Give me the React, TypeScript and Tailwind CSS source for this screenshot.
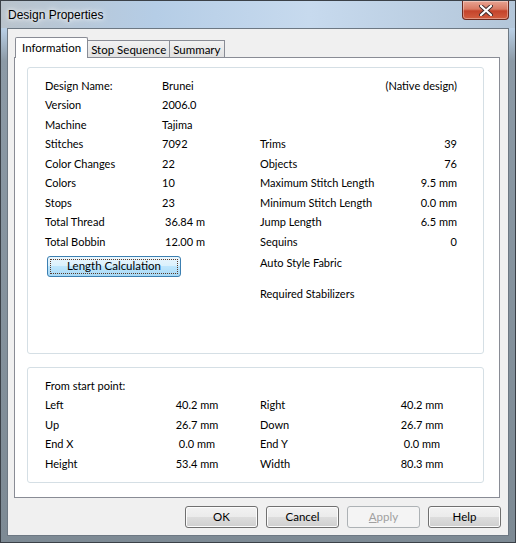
import React from 'react';

const titleFont = { fontFamily: '"Liberation Sans", Arial, sans-serif' };
const bodyFont = { fontFamily: 'Lato, "Liberation Sans", Arial, sans-serif' };

interface Pair {
  label: string;
  value: string;
  pad?: boolean;
}

const leftRows: Pair[] = [
  { label: 'Design Name:', value: 'Brunei' },
  { label: 'Version', value: '2006.0' },
  { label: 'Machine', value: 'Tajima' },
  { label: 'Stitches', value: '7092' },
  { label: 'Color Changes', value: '22' },
  { label: 'Colors', value: '10' },
  { label: 'Stops', value: '23' },
  { label: 'Total Thread', value: '36.84 m', pad: true },
  { label: 'Total Bobbin', value: '12.00 m', pad: true },
];

const rightRows: Pair[] = [
  { label: 'Trims', value: '39' },
  { label: 'Objects', value: '76' },
  { label: 'Maximum Stitch Length', value: '9.5 mm' },
  { label: 'Minimum Stitch Length', value: '0.0 mm' },
  { label: 'Jump Length', value: '6.5 mm' },
  { label: 'Sequins', value: '0' },
];

const extents = [
  ['Left', '40.2 mm', 'Right', '40.2 mm'],
  ['Up', '26.7 mm', 'Down', '26.7 mm'],
  ['End X', '0.0 mm', 'End Y', '0.0 mm'],
  ['Height', '53.4 mm', 'Width', '80.3 mm'],
];

const DialogButton: React.FC<{ label: string; disabled?: boolean }> = ({ label, disabled }) => (
  <button
    className={
      disabled
        ? 'w-[73px] h-[22px] rounded-[3px] border border-[#adb2b5] bg-[#f4f4f4] text-[11.5px] text-[#a0a0a0]'
        : 'w-[73px] h-[22px] rounded-[3px] border border-[#707070] bg-[linear-gradient(to_bottom,#f2f2f2_0%,#ebebeb_50%,#dddddd_50%,#cfcfcf_100%)] text-[11.5px] text-black shadow-[inset_0_0_0_1px_#fcfcfc]'
    }
  >
    {disabled ? (
      <>
        <span className="underline">A</span>pply
      </>
    ) : (
      label
    )}
  </button>
);

const CloseIcon = () => (
  <svg width="14" height="11" viewBox="0 0 14 11">
    <path d="M2 1 L12 10 M12 1 L2 10" stroke="#3d2a2a" strokeWidth="4" strokeLinecap="round" />
    <path d="M2 1 L12 10 M12 1 L2 10" stroke="#ffffff" strokeWidth="2.2" strokeLinecap="round" />
  </svg>
);

export default function App() {
  return (
    <div
      className="w-[516px] h-[543px] flex flex-col overflow-hidden border border-[#3b4148] bg-[linear-gradient(to_bottom,#c0d2e4_0px,#b9cfe5_28px,#8c9aa6_60px,#7d8a94_100%)] text-black"
      style={bodyFont}
    >
      {/* Title bar */}
      <div className="h-[27px] flex items-start justify-between bg-[linear-gradient(to_right,#b9c3cc_0%,#b5cde6_30%,#c7daee_60%,#b3c6d9_100%)]">
        <div
          className="pl-[7px] pt-[7px] text-[12px] leading-[14px] [text-shadow:0_0_8px_#ffffff,0_0_4px_#ffffff]"
          style={titleFont}
        >
          Design Properties
        </div>
        <div className="mr-[6px] w-[47px] h-[19px] flex items-center justify-center rounded-b-[4px] border border-t-0 border-[#6b2a1f] bg-[linear-gradient(to_bottom,#e8a493_0%,#d97a63_45%,#c4432b_55%,#d25e40_100%)] shadow-[inset_0_0_0_1px_rgba(255,255,255,0.35)]">
          <CloseIcon />
        </div>
      </div>

      {/* Client area */}
      <div className="mx-[6px] mb-[6px] flex-1 border border-[#6d7883] bg-[#f0f0f0] flex flex-col pt-[8px] pl-[6px] pr-[8px]">
        {/* Tabs */}
        <div className="flex items-end h-[20px] relative z-10 text-[11.5px]">
          <div className="ml-[1px] h-[21px] -mb-px px-[6px] pt-[2px] bg-white border border-b-0 border-[#898c95] rounded-t-[2px] leading-[16px]">
            Information
          </div>
          <div className="h-[17px] px-[3px] pt-[1px] border border-b-0 border-l-0 border-[#898c95] bg-[linear-gradient(to_bottom,#f2f2f2,#e1e1e1)] leading-[15px]">
            Stop Sequence
          </div>
          <div className="h-[17px] px-[3px] pt-[1px] border border-b-0 border-l-0 border-[#898c95] bg-[linear-gradient(to_bottom,#f2f2f2,#e1e1e1)] leading-[15px]">
            Summary
          </div>
        </div>

        {/* Tab panel */}
        <div className="h-[441px] border border-[#898c95] bg-white px-[12px] pt-[9px] text-[11px]">
          {/* General info box */}
          <div className="w-[457px] h-[287px] border border-[#d5dfe5] rounded-[3px] pt-[8px] pl-[17px] flex">
            <div className="w-[215px] flex flex-col">
              {leftRows.map((r) => (
                <div key={r.label} className="h-[19.5px] flex items-center">
                  <span className="w-[117px]">{r.label}</span>
                  <span className={r.pad ? 'pl-[3px]' : ''}>{r.value}</span>
                </div>
              ))}
              <button className="mt-[4px] ml-[2px] w-[134px] h-[21px] rounded-[3px] border border-[#3c7fb1] bg-[linear-gradient(to_bottom,#eaf6fd_0%,#d9f0fc_50%,#bee6fd_50%,#a7d9f5_100%)] p-[2px]">
                <span className="flex h-full items-center justify-center border border-dotted border-[#5a3a2a] text-[11.5px]">
                  Length Calculation
                </span>
              </button>
            </div>
            <div className="w-[197px] flex flex-col">
              <div className="h-[19.5px] flex items-center justify-end">(Native design)</div>
              <div className="h-[39px]" />
              {rightRows.map((r) => (
                <div key={r.label} className="h-[19.5px] flex items-center justify-between">
                  <span>{r.label}</span>
                  <span>{r.value}</span>
                </div>
              ))}
              <div className="mt-[2px] h-[19.5px] flex items-center">Auto Style Fabric</div>
              <div className="mt-[11px] h-[19.5px] flex items-center">Required Stabilizers</div>
            </div>
          </div>

          {/* Extents box */}
          <div className="mt-[13px] w-[457px] h-[116px] border border-[#d5dfe5] rounded-[3px] pt-[8px] pl-[17px]">
            <div className="h-[19.5px] flex items-center">From start point:</div>
            {extents.map((r) => (
              <div key={r[0]} className="h-[19.5px] grid grid-cols-[127px_50px_38px_137px_50px] items-center">
                <span>{r[0]}</span>
                <span className="text-center whitespace-nowrap">{r[1]}</span>
                <span />
                <span>{r[2]}</span>
                <span className="text-center whitespace-nowrap">{r[3]}</span>
              </div>
            ))}
          </div>
        </div>

        {/* Dialog buttons */}
        <div className="mt-[8px] flex justify-end gap-[8px] -mr-[1px]">
          <DialogButton label="OK" />
          <DialogButton label="Cancel" />
          <DialogButton label="Apply" disabled />
          <DialogButton label="Help" />
        </div>
      </div>
    </div>
  );
}
